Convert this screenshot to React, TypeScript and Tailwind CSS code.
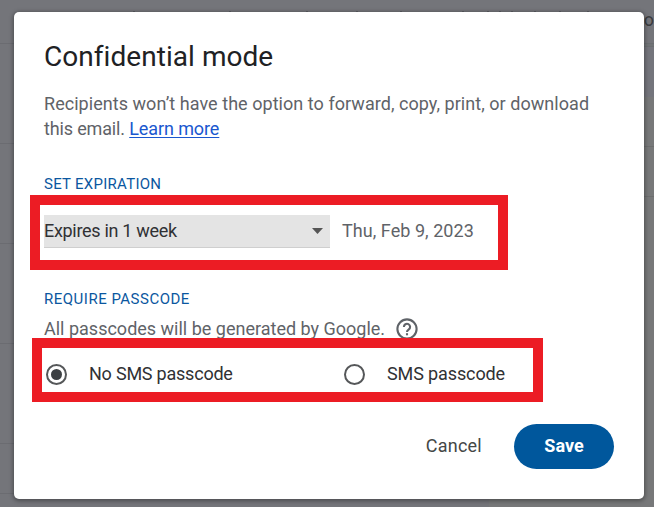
const HelpIcon = () => (
  <svg viewBox="0 0 22 22" className="h-[22px] w-[22px]" fill="none" stroke="#5f6368" strokeWidth="2.1">
    <circle cx="11" cy="11" r="9.6" />
    <path d="M7.9 8.9a3.1 3.1 0 1 1 4.9 2.5c-1 .75-1.8 1.25-1.8 2.5" />
    <path d="M11 15.2v2.1" />
  </svg>
);

const Radio = ({ checked }: { checked?: boolean }) => (
  <span className="flex h-[21px] w-[21px] shrink-0 items-center justify-center rounded-full border-2 border-[#555759]">
    {checked && <span className="h-[11px] w-[11px] rounded-full bg-[#3c4043]" />}
  </span>
);

const Backdrop = () => (
  <div className="absolute inset-0 flex justify-between bg-[#74757a]">
    <div className="w-4 pt-[43px]">
      <div className="h-[101px] border-y border-[#6b6c71]" />
      <div className="h-[100px] border-b border-[#6b6c71]" />
      <div className="h-[100px] border-b border-[#6b6c71]" />
      <div className="h-[100px] border-b border-[#6b6c71]" />
      <div className="h-[50px] border-b border-[#6b6c71]" />
    </div>
    <div className="flex w-[165px] flex-col">
      <div className="flex h-[43px] justify-end pt-[8px] font-[Roboto,sans-serif] text-[18px] leading-6 text-[#3b3c40]">
        <span>o</span>
      </div>
      <div className="h-1 border-y border-[#6b6e71] bg-[#707376]" />
      <div className="h-[50px] bg-[#74757c]" />
      <div className="h-[50px] border-b border-[#6c6d6e] bg-[#777879]" />
      <div className="h-[50px] border-b border-[#6c6d6e] bg-[#777879]" />
      <div className="grow bg-[#777879]" />
    </div>
  </div>
);

export default function App() {
  return (
    <div className="relative h-[507px] w-[654px] overflow-hidden pl-[14px] pt-3 font-[Roboto,sans-serif] text-[18px] leading-[25px] text-[#5f6368]">
      <Backdrop />
      <svg className="absolute left-0 top-[11px] h-px w-[654px]" stroke="#5d5e63" strokeWidth="1">
        <path d="M133 .5h2M229 .5h2M306 .5h2M356 .5h2M400 .5h2M462 .5h2M487 .5h2M499 .5h2M511 .5h2M534 .5h2M559 .5h2M587 .5h2" />
      </svg>
      <main className="relative flex h-[487px] w-[630px] flex-col rounded-[5px] bg-white px-[30px] shadow-[0_1px_4px_1px_rgba(0,0,0,0.35)]">
        <h1 className="mt-[27px] whitespace-nowrap text-[28px] leading-9 tracking-[0.05px] text-[#202124]">Confidential mode</h1>
        <p className="mt-4 whitespace-nowrap">
          <span className="tracking-[0.045px]">Recipients won’t have the option to forward, copy, print, or download</span>
          <br />
          <span className="tracking-[-0.15px]">this email. </span>
          <a className="tracking-[-0.1px] text-[#1a57cf] underline underline-offset-2">Learn more</a>
        </p>
        <h2 className="mt-[33px] text-[15px] leading-5 tracking-[0.27px] text-[#0b57a0]">SET EXPIRATION</h2>
        <div className="mt-[21px] flex h-[33px] items-center">
          <div className="flex h-[33px] w-[286px] items-center justify-between border-b border-[#cfcfcf] bg-[#e4e4e4] pr-[7px] text-[#303134]">
            <span className="pb-[2px] tracking-[-0.3px]">Expires in 1 week</span>
            <svg viewBox="0 0 11 6" className="h-[6px] w-[11px]"><path d="M0 0h11L5.5 6z" fill="#555" /></svg>
          </div>
          <span className="ml-[12px] whitespace-nowrap pb-[2px] tracking-[0.05px]">Thu, Feb 9, 2023</span>
        </div>
        <h2 className="mt-[41px] text-[15px] leading-5 tracking-[0.5px] text-[#0b57a0]">REQUIRE PASSCODE</h2>
        <div className="mt-[9px] flex h-[22px] items-center">
          <span className="w-[352px] whitespace-nowrap pb-[2px]">All passcodes will be generated by Google.</span>
          <HelpIcon />
        </div>
        <div className="mt-[22px] flex h-[25px] items-center pl-[2px] text-[#303134]">
          <div className="flex w-[298px] items-center gap-[22px]"><Radio checked /><span className="-mt-[2px] tracking-[-0.22px]">No SMS passcode</span></div>
          <div className="flex items-center gap-[22px]"><Radio /><span className="-mt-[2px] tracking-[-0.12px]">SMS passcode</span></div>
        </div>
        <div className="mt-[37px] flex h-[45px] items-center justify-end gap-8">
          <button className="pb-[3px] tracking-[0.25px] text-[#444746]">Cancel</button>
          <button className="h-[45px] w-[100px] rounded-full bg-[#00579c] pb-[3px] font-bold text-white">Save</button>
        </div>
      </main>
      <div className="absolute left-[30px] top-[195px] h-[75px] w-[478px] border-[10px] border-[#ec1c24]" />
      <div className="absolute left-[32px] top-[338px] h-[64px] w-[511px] border-[10px] border-[#ec1c24]" />
    </div>
  );
}
